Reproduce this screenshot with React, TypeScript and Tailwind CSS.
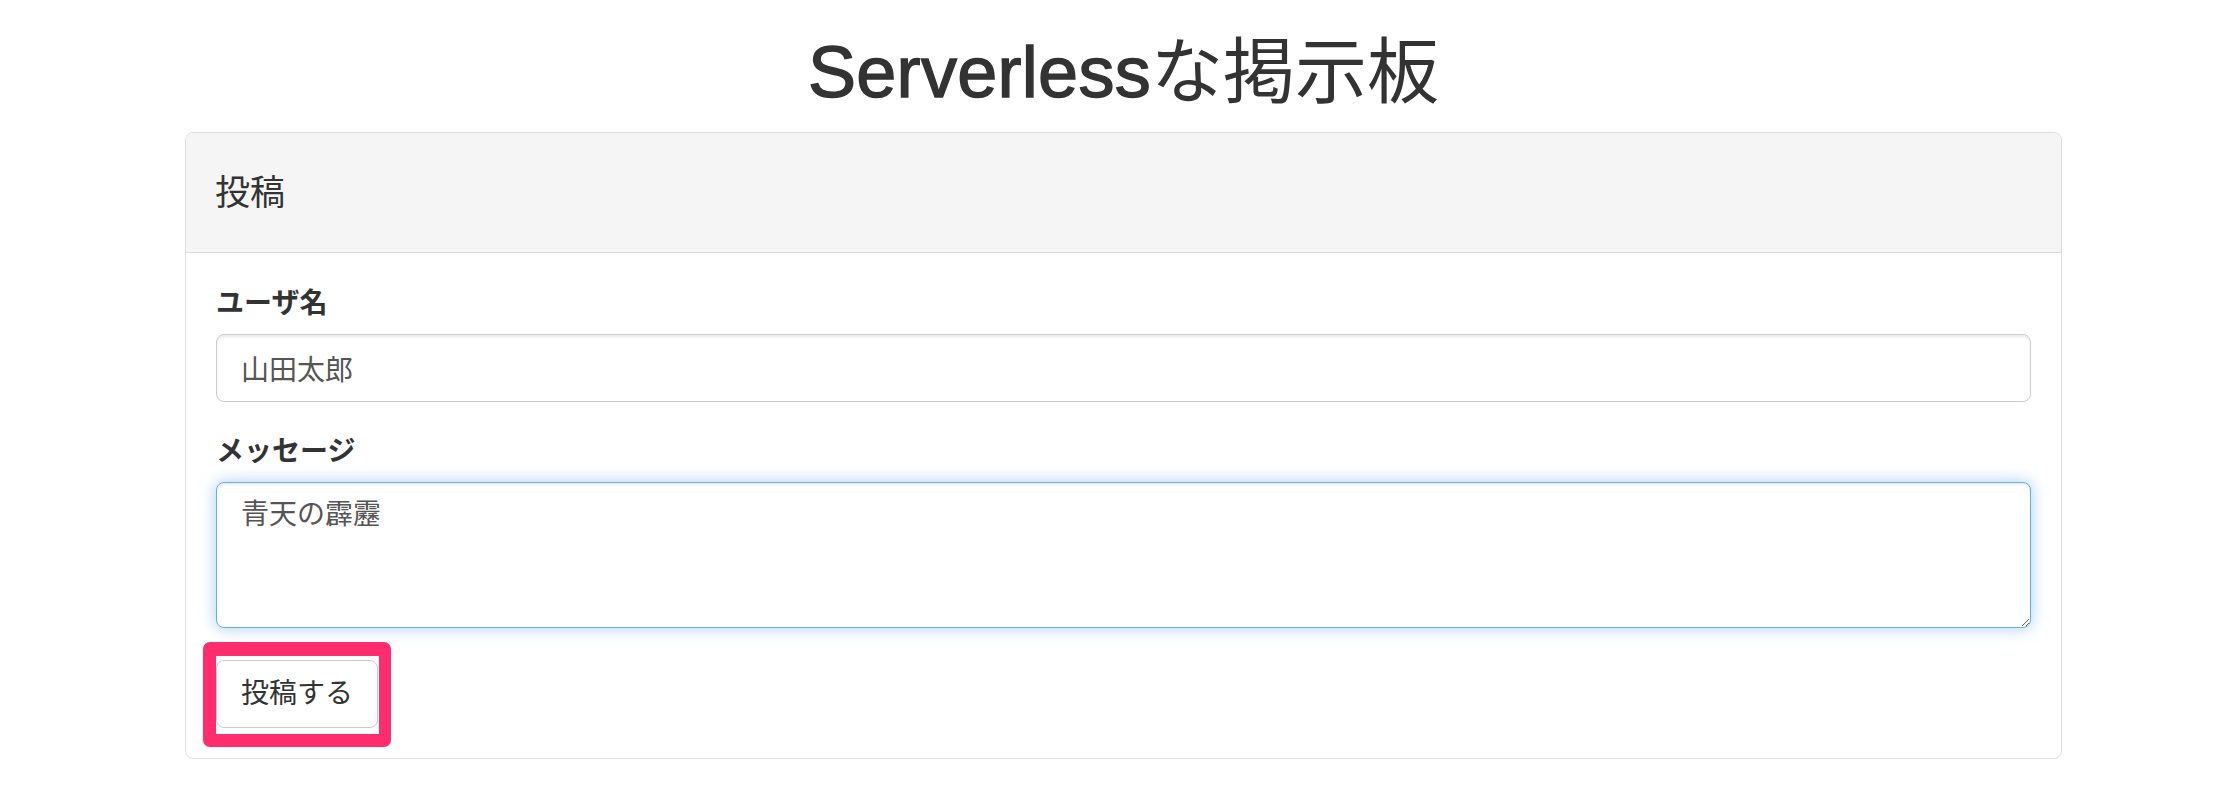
import React from "react";

export default function App() {
  return (
    <div
      className="min-h-[798px] bg-white text-[#333]"
      style={{ fontFamily: '"Liberation Sans", "Noto Sans CJK JP", sans-serif' }}
    >
      <div className="ml-[185px] w-[1877px] pt-[33px]">
        <h1 className="h-[79px] mb-[20px] text-center text-[72px] leading-[79px] font-normal text-[#333]">
          <span className="[-webkit-text-stroke:1.4px_#333] tracking-[0.3px]">Serverless</span>な掲示板
        </h1>
        <div className="border border-[#ddd] rounded-[8px] bg-white">
          <div className="h-[120px] flex items-center px-[29px] bg-[#f5f5f5] border-b border-[#ddd] rounded-t-[7px]">
            <span className="text-[35px] leading-[38px] text-[#333]">投稿</span>
          </div>
          <div className="px-[30px] pt-[31px] pb-[30px]">
            <div className="mb-[30px]">
              <label className="block text-[28px] font-bold leading-[40px] mb-[10px] text-[#333]">
                ユーザ名
              </label>
              <input
                type="text"
                defaultValue="山田太郎"
                className="block w-full h-[68px] px-[24px] py-[12px] border border-[#ccc] rounded-[8px] text-[28px] leading-[40px] text-[#555] bg-white shadow-[inset_0_2px_2px_rgba(0,0,0,0.075)] outline-none"
              />
            </div>
            <div className="mb-[32px]">
              <label className="block text-[28px] font-bold leading-[40px] mb-[10px] text-[#333]">
                メッセージ
              </label>
              <textarea
                defaultValue="青天の霹靂"
                rows={3}
                className="block w-full h-[146px] px-[24px] py-[12px] border border-[#66afe9] rounded-[8px] text-[28px] leading-[40px] text-[#555] bg-white shadow-[inset_0_2px_2px_rgba(0,0,0,0.075),0_0_16px_rgba(102,175,233,0.6)] outline-none"
              />
            </div>
            <div className="relative inline-block">
              <button
                type="button"
                className="block h-[68px] px-[24px] border border-[#ccc] rounded-[8px] bg-white text-[28px] leading-[40px] text-[#333]"
              >
                投稿する
              </button>
              <div className="absolute left-[-13px] top-[-18px] w-[188px] h-[105px] border-l-[13px] border-t-[14px] border-r-[12px] border-b-[13px] border-[#ff2d6e] rounded-[7px] pointer-events-none" />
            </div>
          </div>
        </div>
      </div>
    </div>
  );
}
